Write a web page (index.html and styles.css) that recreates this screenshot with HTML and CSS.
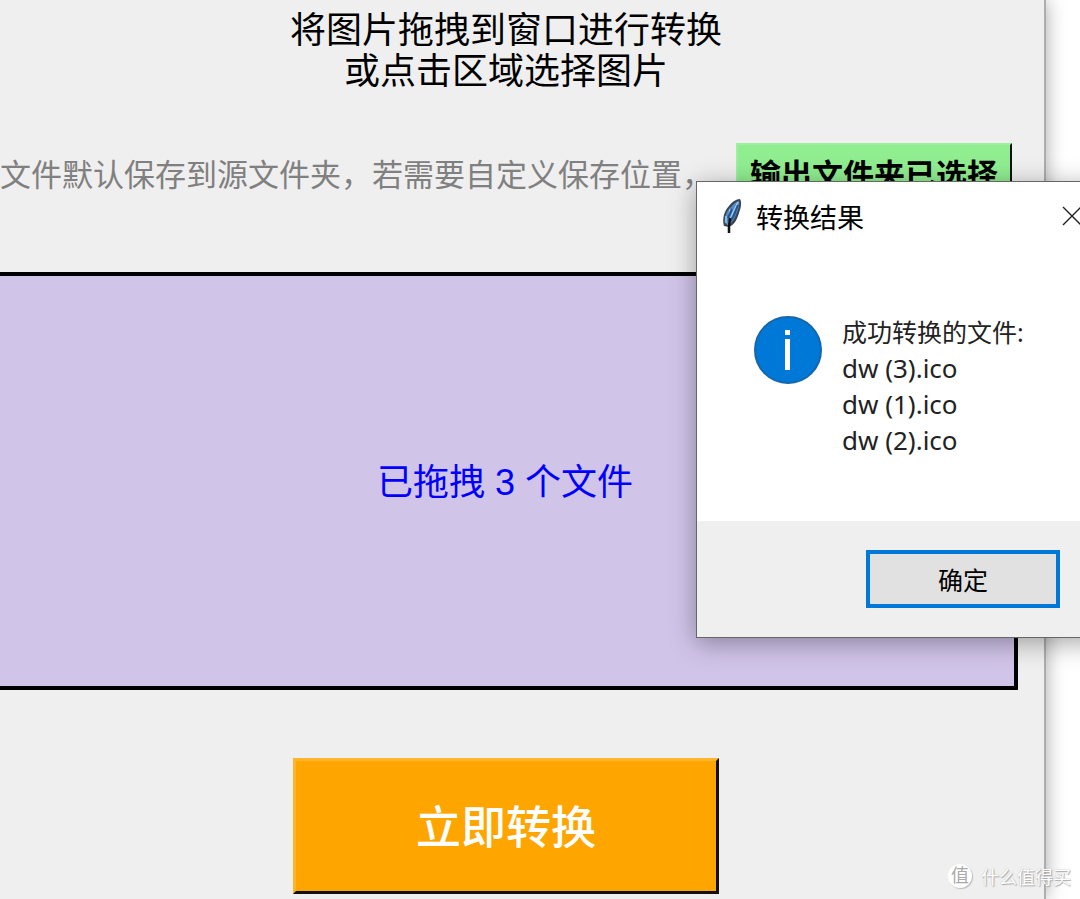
FILE: index.html
```html
<!DOCTYPE html>
<html lang="zh-CN">
<head>
<meta charset="utf-8">
<meta name="viewport" content="width=device-width, initial-scale=1">
<title>转换结果</title>
<link rel="stylesheet" href="styles.css">
</head>
<body>
<div class="desktop">
  <main class="app">
    <h1 class="title">将图片拖拽到窗口进行转换<br>或点击区域选择图片</h1>
    <div class="output-row">
      <p class="hint">文件默认保存到源文件夹，若需要自定义保存位置，</p>
      <button class="output-button" type="button">输出文件夹已选择</button>
    </div>
    <button class="drop-area" type="button">已拖拽 3 个文件</button>
    <button class="convert-button" type="button">立即转换</button>
  </main>

  <section class="dialog" role="dialog" aria-labelledby="dialog-title">
    <header class="dialog-header">
      <svg class="feather" viewBox="0 0 24 38" aria-hidden="true">
        <path d="M20 2 C22 5 21 11 19 16 C17 23 14 28 9 30 L4 29 C2 22 4 14 9 9 C12 5 16 2 20 2Z" fill="#3a4452"/>
        <path d="M19 4 C20 7 18 14 16 18 C14 23 11 27 8 28 L5 26 C4 21 6 15 10 11 C13 8 15 5 19 4Z" fill="#4f8bc8"/>
        <path d="M18 5 L13 15 L8 28 M10 12 L9 20 M6 19 L6 26" fill="none" stroke="#9cc6ec" stroke-width="1.5"/>
        <path d="M18 8 L14 18 L10 25 M12 12 L8 21" fill="none" stroke="#285486" stroke-width="2"/>
        <path d="M10 21 L9 29 L9 36" fill="none" stroke="#111" stroke-width="2.5"/>
      </svg>
      <h2 class="dialog-title" id="dialog-title">转换结果</h2>
      <button class="close" type="button" aria-label="关闭">
        <svg viewBox="0 0 20 20" aria-hidden="true"><path d="M1 1 L19 19 M19 1 L1 19" fill="none" stroke="#222" stroke-width="1.4"/></svg>
      </button>
    </header>
    <div class="dialog-body">
      <svg class="info" viewBox="0 0 68 68" aria-hidden="true">
        <circle cx="34" cy="34" r="33" fill="#0078d7" stroke="#1566ab" stroke-width="2"/>
        <rect x="31" y="14" width="5" height="5" fill="#fff"/>
        <rect x="31" y="23" width="5" height="31" fill="#fff"/>
      </svg>
      <div class="message">
        <p>成功转换的文件:</p>
        <ul class="files">
          <li>dw (3).ico</li>
          <li>dw (1).ico</li>
          <li>dw (2).ico</li>
        </ul>
      </div>
    </div>
    <footer class="dialog-footer">
      <button class="ok" type="button">确定</button>
    </footer>
  </section>

  <div class="watermark">
    <span class="badge">值</span>
    <span>什么值得买</span>
  </div>
</div>
</body>
</html>
```
FILE: styles.css
```css
* {
  box-sizing: border-box;
}

body,
h1,
h2,
p,
ul {
  margin: 0;
  padding: 0;
  font-weight: 400;
}

body {
  background: #fff;
  font-family: "Liberation Sans", "Noto Sans CJK SC", sans-serif;
}

button {
  font-family: inherit;
  padding: 0;
  cursor: pointer;
}

.desktop {
  position: relative;
  display: flex;
  min-height: 100vh;
  padding-right: 34px;
  overflow: hidden;
}

.app {
  flex: 1;
  min-width: 0;
  display: flex;
  flex-direction: column;
  padding: 10px 26px 5px 0;
  background: #efefef;
  border-right: 2px solid #adadad;
  box-shadow: 0 0 18px rgba(0, 0, 0, 0.35);
}

.title {
  margin-right: 6px;
  font-size: 36px;
  line-height: 41px;
  text-align: center;
  color: #000;
}

.output-row {
  display: flex;
  align-items: center;
  justify-content: space-between;
  margin: 51px 6px 66px 0;
  white-space: nowrap;
}

.hint {
  padding-bottom: 4px;
  font-size: 31px;
  color: #808080;
}

.output-button {
  height: 63px;
  padding: 0 12px 4px;
  border: 2px solid;
  border-color: #9df09d #111 #111 #9df09d;
  background: #90ee90;
  color: #000;
  font-size: 31px;
  font-weight: 700;
}

.drop-area {
  flex: 1;
  min-height: 300px;
  margin-left: -8px;
  padding-bottom: 4px;
  border: 4px solid #000;
  background: #d1c4e9;
  color: #00f;
  font-size: 36px;
}

.convert-button {
  align-self: center;
  width: 426px;
  height: 136px;
  margin: 68px 6px 0 0;
  padding-bottom: 4px;
  border: 3px solid;
  border-color: #ffb52b #111 #111 #ffb52b;
  background: #ffa500;
  color: #fff;
  font-size: 45px;
  font-weight: 500;
}

.dialog {
  position: absolute;
  top: 181px;
  right: -24px;
  width: 408px;
  border: 1px solid #666;
  background: #fff;
  box-shadow: 0 5px 24px rgba(0, 0, 0, 0.35);
}

.dialog-header {
  display: flex;
  align-items: center;
  height: 68px;
  padding: 0 21px 0 23px;
}

.feather {
  width: 24px;
  height: 38px;
}

.dialog-title {
  flex: 1;
  margin-left: 12px;
  font-size: 27px;
  color: #000;
}

.close {
  display: flex;
  border: 0;
  background: none;
}

.close svg {
  width: 20px;
  height: 20px;
}

.dialog-body {
  display: flex;
  align-items: flex-start;
  gap: 20px;
  padding: 64px 24px 63px 57px;
}

.info {
  flex: none;
  width: 68px;
  height: 68px;
  margin-top: 2px;
}

.message {
  font-family: "Noto Sans", "Noto Sans CJK SC", sans-serif;
  font-size: 25px;
  line-height: 36px;
  color: #222;
  white-space: nowrap;
}

.files {
  list-style: none;
  font-size: 26px;
}

.dialog-footer {
  display: flex;
  justify-content: flex-end;
  padding: 29px 43px;
  background: #efefef;
}

.ok {
  width: 194px;
  height: 58px;
  border: 4px solid #0078d7;
  background: #e1e1e1;
  color: #000;
  font-size: 25px;
}

.watermark {
  position: absolute;
  right: 9px;
  bottom: 10px;
  display: flex;
  align-items: center;
  gap: 9px;
  color: #fff;
  font-size: 18px;
  text-shadow: 1px 1px 1px #aaa, 0 0 1px #aaa;
}

.badge {
  width: 24px;
  height: 24px;
  border-radius: 50%;
  background: #fff;
  box-shadow: 1px 1px 1px #bbb;
  color: #aaa;
  line-height: 24px;
  text-align: center;
  text-shadow: none;
}
```
